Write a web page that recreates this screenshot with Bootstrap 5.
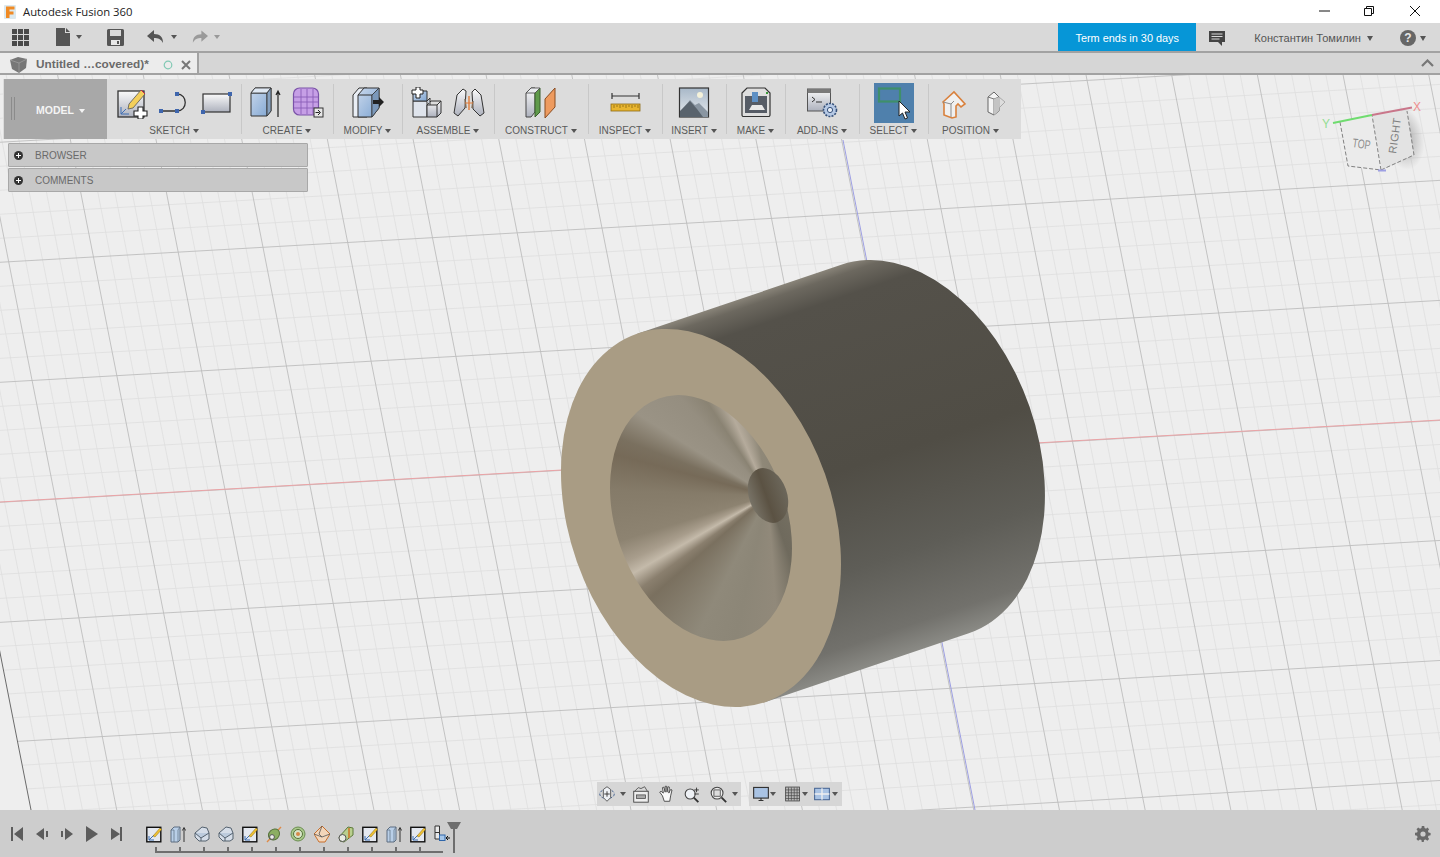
<!DOCTYPE html>
<html lang="en">
<head>
<meta charset="utf-8">
<title>Autodesk Fusion 360</title>
<link href="https://cdn.jsdelivr.net/npm/bootstrap@5.3.0/dist/css/bootstrap.min.css" rel="stylesheet">
<style>
html,body{height:857px;overflow:hidden;background:#eee;font-family:"Liberation Sans",Arial,sans-serif}
.app{height:857px}
.titlebar{height:23px;background:#fff;font:11.3px "Open Sans","Noto Sans",sans-serif;color:#222;flex:none}
.win-ctl{margin-left:auto;padding-right:15px;margin-top:-2px}
.quick{height:30px;background:#d9d9d9;border-bottom:2px solid #a2a2a2;flex:none}
.quick svg{display:block}
.q-right{margin-top:2px}
.term{width:138px;height:28px;background:#0696d7;color:#fff;font-size:10.9px;padding-top:2px;align-self:flex-start}
.user{font-size:11.1px;color:#555;white-space:nowrap}
.caret{display:inline-block;width:0;height:0;border-left:3px solid transparent;border-right:3px solid transparent;border-top:4px solid #555;flex:none}
.caret-lg{border-left-width:3.5px;border-right-width:3.5px;border-top-width:5px}
.tabrow{height:22px;background:#d6d6d6;border-bottom:2px solid #a2a2a2;flex:none}
.doc-tab{width:199px;height:20px;background:#ececec;border-right:2px solid #a2a2a2;color:#6a6a6a;font-weight:700;font-size:11.8px;padding-top:4px}
.viewport{flex:1 1 auto;overflow:hidden;background:#eee}
.scene{position:absolute;inset:0;width:1440px;height:735px}
.cone{width:100%;height:100%;background:conic-gradient(from 0deg at 158px 120.5px,#8d8676 0deg,#6f6a5d 161deg,#91897a 176deg,#8c8677 193deg,#8f897a 207deg,#7a705f 229deg,#8a7f6e 234deg,#c4baaa 240deg,#a89d8c 245deg,#8d8371 253deg,#857b69 272deg,#766a58 285deg,#7a705f 291deg,#9a9385 302deg,#958e80 318deg,#8a8373 327deg,#b5ab9c 336deg,#8f8878 350deg,#8d8676 360deg)}
.toolbar{left:3px;top:4px;width:1018px;height:60px;background:#dcdcdc}
.model{width:103px;height:60px;background:#a8a8a8;color:#f4f4f4;font-weight:700;font-size:10.5px;flex:none;padding-left:32px;padding-top:3px;gap:5px;margin-left:1px}
.model .caret{border-top-color:#f4f4f4}
.grip{left:7px;top:18px;width:4px;height:23px;border-left:1px solid #8b8b8b;border-right:1px solid #8b8b8b}
.tb-group{height:60px;position:relative;flex:none;padding-top:8px}
.tb-group+.tb-group::before{content:"";position:absolute;left:0;top:5px;bottom:5px;width:1px;background:#c8c8c8}
.tb-icons{gap:10px;height:32px}
.tb-icons svg{width:32px;height:32px;display:block}
.tb-label{font-size:10px;line-height:12px;color:#5a5a5a;margin-top:6px;gap:3px;white-space:nowrap}
.tb-label-l{margin-left:-8px}
.w134{width:134px}.w92{width:92px}.w69{width:69px}.w94{width:94px}.w74{width:74px}.w64{width:64px}.w59{width:59px}.w93{width:93px}
.tb-icons .sel{width:40px;height:40px;background:#4f80ac;margin-top:-4px;margin-bottom:-4px}
.panels{left:8px;top:68px;width:300px;gap:1px}
.panel-row{height:24px;background:#c8c8c8;border:1px solid #a8a8a8;color:#6a6a6a;font-size:10px;border-radius:1px;padding-left:5px;padding-top:1px;gap:12px}
.dot{width:9px;height:9px;flex:none}
.navbar-3d{left:597px;top:707px;gap:8px}
.nav-seg{height:24px;background:#d6d6d6}
.nav-seg svg{width:20px;height:20px;display:block}
.nav-a{padding-right:3px}
.nav-b{padding:0 4px 0 3px}
.nav-b svg{width:18px;height:18px}
.gl1{margin-left:1px}.gl3{margin-left:3px}.gl4{margin-left:4px}.gl5{margin-left:5px}.gl6{margin-left:6px}.gl8{margin-left:8px}
.timeline{height:47px;background:#cdcdcd;flex:none}
.tl-play{gap:11px;padding-left:10px}
.tl-play svg{width:14px;height:16px;display:block}
.tl-items{left:146px;top:15px;gap:8px}
.tl-items svg{width:16px;height:18px;display:block}
.tl-rail{left:155px;top:37px;width:288px;height:6px;border-bottom:2px solid #6e6e6e;background:repeating-linear-gradient(90deg,#6e6e6e 0 2px,transparent 2px 24px)}
.tl-marker{left:447px;top:11px}
.tl-gear{right:9px;top:16px}
</style>
</head>
<body>
<svg width="0" height="0" class="position-absolute">
<defs>
<linearGradient id="gBlue" x1="0" y1="0" x2="1" y2="1"><stop offset="0" stop-color="#c9d8ec"/><stop offset="1" stop-color="#7fa5d2"/></linearGradient>
<linearGradient id="gGray" x1="0" y1="0" x2="0" y2="1"><stop offset="0" stop-color="#fafafa"/><stop offset="1" stop-color="#adb1bd"/></linearGradient>
<linearGradient id="gSky" x1="0" y1="0" x2="0" y2="1"><stop offset="0" stop-color="#a8b8c8"/><stop offset="1" stop-color="#e6eaee"/></linearGradient>
<linearGradient id="gBody" gradientUnits="userSpaceOnUse" x1="842" y1="264" x2="968" y2="634"><stop offset="0" stop-color="#8a857a"/><stop offset=".025" stop-color="#6c685f"/><stop offset=".08" stop-color="#54514a"/><stop offset=".5" stop-color="#504d45"/><stop offset=".75" stop-color="#5e5d57"/><stop offset=".93" stop-color="#72716c"/><stop offset="1" stop-color="#8b8b86"/></linearGradient>
<linearGradient id="gSmall" x1="0" y1="0" x2="0" y2="1"><stop offset="0" stop-color="#6c675b"/><stop offset=".55" stop-color="#5b5243"/><stop offset="1" stop-color="#787367"/></linearGradient>
<radialGradient id="gShade"><stop offset="0" stop-color="#777" stop-opacity=".6"/><stop offset="1" stop-color="#777" stop-opacity="0"/></radialGradient>
<symbol id="tlSketch" viewBox="0 0 16 18"><rect x=".8" y="2.3" width="14" height="14.5" fill="#e4e8ef" stroke="#111" stroke-width="1.4"/><path d="M3 15V11M3 15H8M3 15L8 10" stroke="#3a6cb0" stroke-width="1" fill="none"/><path d="M7 11L14 3l1.6 1.6L9 12z" fill="#f1c232" stroke="#8a6d10" stroke-width=".5"/></symbol>
<symbol id="tlExtrude" viewBox="0 0 16 18"><path d="M1 5l3-3h6v13l-2 2H1z" fill="#b9cfe8" stroke="#5d6d80"/><path d="M4 5h-3M8 5l2-3M8 5v12M4 5v12" stroke="#5d6d80" fill="none" stroke-width=".7"/><path d="M14 17V3M12.4 5.5L14 2.500l1.600 3" stroke="#333" fill="none"/></symbol>
<symbol id="tlChamfer" viewBox="0 0 16 18"><path d="M1 8l7-6 5 1 2 5v6l-3 2H5l-4-4z" fill="#d5dde8" stroke="#55626f"/><path d="M1 8l6 5 8-5M7 13v3" stroke="#55626f" fill="#bccbdd"/></symbol>
<symbol id="gearI" viewBox="0 0 16 16"><path d="M6.800 0h2.400l.4 2.100 1.500.6L12.400 1.500l1.700 1.700-1.200 1.800.6 1.500 2.100.4v2.400l-2.100.4-.6 1.500 1.200 1.800-1.700 1.700-1.800-1.200-1.500.6-.4 2.100H6.800l-.4-2.100-1.500-.6-1.800 1.200-1.700-1.700 1.200-1.800-.6-1.500L0 9.200V6.800l2.100-.4.6-1.500L1.500 3.200l1.700-1.700 1.800 1.200 1.500-.6z" fill="#6a6a6a"/><circle cx="8" cy="8" r="2.600" fill="#cdcdcd"/></symbol>
</defs>
</svg>

<div class="app d-flex flex-column">
  <!-- title bar -->
  <div class="titlebar d-flex align-items-center">
    <svg class="ms-1 me-2" width="12" height="14" viewBox="0 0 12 14"><rect width="12" height="14" rx="1" fill="#dce9ee"/><path d="M2 1.500h8.500v3H5.500v2h4v3h-4v3.500H2z" fill="#f08a24"/></svg>
    <span style="margin-left:-1px">Autodesk Fusion 360</span>
    <div class="win-ctl d-flex align-items-center">
      <svg width="16" height="12" viewBox="0 0 16 12"><path d="M1 6h11" stroke="#111"/></svg>
      <svg style="margin-left:26.500px" width="16" height="12" viewBox="0 0 16 12"><path d="M3.500 3.500h7v7h-7zM5.500 3.500v-2h7v7h-2" fill="none" stroke="#111"/></svg>
      <svg style="margin-left:32.500px" width="16" height="12" viewBox="0 0 16 12"><path d="M1 1l10 10M11 1L1 11" stroke="#111"/></svg>
    </div>
  </div>

  <!-- quick access -->
  <div class="quick d-flex align-items-center position-relative">
    <svg class="flex-none" style="margin-left:12px" width="18" height="17" viewBox="0 0 18 17"><path d="M0 0h5v5H0zM6 0h5v5H6zM12 0h5v5h-5zM0 6h5v5H0zM6 6h5v5H6zM12 6h5v5h-5zM0 12h5v5H0zM6 12h5v5H6zM12 12h5v5h-5z" fill="#4a4a4a"/></svg>
    <svg style="margin-left:26px" width="15" height="18" viewBox="0 0 15 18"><path d="M0 0h9v5h5v13H0zM10 0l4 4h-4z" fill="#555"/></svg>
    <span class="caret" style="margin-left:5px"></span>
    <svg style="margin-left:25px" width="17" height="17" viewBox="0 0 17 17"><path d="M0 1.500A1.500 1.500 0 011.500 0h14A1.500 1.500 0 0117 1.500v14a1.500 1.500 0 01-1.500 1.500h-14A1.500 1.500 0 010 15.500z" fill="#555"/><rect x="3" y="1" width="11" height="6" fill="#d9d9d9"/><rect x="4" y="11" width="9" height="5" fill="#e8e8e8"/><rect x="10" y="12" width="2" height="3" fill="#555"/></svg>
    <svg style="margin-left:23px" width="18" height="14" viewBox="0 0 18 14"><path d="M7 0L0 6l7 6V8c4 0 7 1 9 5 0-6-3-9-9-9z" fill="#555"/></svg>
    <span class="caret" style="margin-left:6px"></span>
    <svg style="margin-left:14px" width="17" height="14" viewBox="0 0 18 14"><path d="M11 0l7 6-7 6V8c-4 0-7 1-9 5 0-6 3-9 9-9z" fill="#9a9a9a"/></svg>
    <span class="caret" style="margin-left:6px;border-top-color:#999"></span>
    <div class="term d-flex align-items-center justify-content-center ms-auto">Term ends in 30 days</div>
    <svg class="q-right" style="margin-left:13px" width="16" height="15" viewBox="0 0 16 15"><path d="M0 0h16v11h-3v4l-4-4H0z" fill="#444"/><path d="M2.500 3h11M2.500 5.500h11M2.500 8h8" stroke="#d9d9d9"/></svg>
    <span class="user q-right" style="margin-left:29px">Константин Томилин</span>
    <span class="caret caret-lg q-right" style="margin-left:6px"></span>
    <svg class="q-right" style="margin-left:27px" width="16" height="16" viewBox="0 0 16 16"><circle cx="8" cy="8" r="8" fill="#666"/><text x="8" y="12.300" font-size="12" font-weight="700" text-anchor="middle" fill="#e6e6e6" font-family="Liberation Sans">?</text></svg>
    <span class="caret caret-lg q-right" style="margin-left:4px;margin-right:14px"></span>
  </div>

  <!-- document tab -->
  <div class="tabrow d-flex align-items-center">
    <div class="doc-tab d-flex align-items-center">
      <svg style="margin-left:10px" width="17" height="16" viewBox="0 0 17 16"><path d="M0 3l8-3 9 2-1 9-7 5-7-4z" fill="#777"/><path d="M0 3l9 3 8-4M9 6l0 10" stroke="#aaa" stroke-width=".6" fill="none"/></svg>
      <span style="margin-left:9px">Untitled …covered)*</span>
      <svg style="margin-left:14px" width="10" height="10" viewBox="0 0 10 10"><circle cx="5" cy="5" r="3.800" fill="none" stroke="#82c9b4" stroke-width="1.200"/></svg>
      <svg style="margin-left:8px" width="10" height="10" viewBox="0 0 10 10"><path d="M1 1l8 8M9 1L1 9" stroke="#777" stroke-width="2"/></svg>
    </div>
    <svg class="ms-auto" style="margin-right:6px" width="13" height="8" viewBox="0 0 13 8"><path d="M1 7l5.500-5.500L12 7" stroke="#777" stroke-width="2.200" fill="none"/></svg>
  </div>

  <!-- viewport -->
  <div class="viewport position-relative">
    <svg class="scene" viewBox="0 75 1440 735">
      <g id="grid"></g>
      <path d="M0 502L1440 420" stroke="#eba3a6" stroke-width="1"/>
      <path d="M843 140L975 810" stroke="#9d9fe3" stroke-width="1"/>
      <!-- body -->
      <path d="M637.200 333.800L841.200 264.800A195 131.600 70.600 0 1 1029.600 406.800A195 131.600 70.600 0 1 968.800 633.200L764.800 702.200z" fill="url(#gBody)"/>
      <!-- front face -->
      <ellipse cx="701" cy="518" rx="195" ry="131.600" transform="rotate(70.600 701 518)" fill="#a99c84"/>
      <clipPath id="hole"><ellipse cx="701" cy="518" rx="126.800" ry="85.500" transform="rotate(70.600 701 518)"/></clipPath>
      <g clip-path="url(#hole)">
        <foreignObject x="610" y="375" width="200" height="280"><div xmlns="http://www.w3.org/1999/xhtml" class="cone"></div></foreignObject>
      </g>
      <ellipse cx="768" cy="495.500" rx="28.300" ry="19" transform="rotate(70.600 768 495.500)" fill="url(#gSmall)"/>
      <!-- view cube -->
      <g>
        <ellipse cx="1404" cy="138" rx="20" ry="32" transform="rotate(-10 1404 138)" fill="url(#gShade)"/>
        <path d="M1340 122L1372 115L1407 111L1413 155L1382 170L1348 167z" fill="#ebebeb"/>
        <path d="M1372 115L1407 111L1414 155L1382 170z" fill="#e3e3e3"/>
        <path d="M1340 122L1348 166L1381 170L1372 115M1381 170L1414 155L1407 111" fill="none" stroke="#666" stroke-width=".8" stroke-dasharray="4 2"/>
        <text x="0" y="0" transform="translate(1352 147) rotate(8) scale(.8 1.150)" font-size="11" fill="#8c8c8c" font-family="Liberation Sans">TOP</text>
        <text x="0" y="0" transform="translate(1396 154) rotate(-82)" font-size="11" letter-spacing=".4" fill="#808080" font-family="Liberation Sans">RIGHT</text>
        <path d="M1333 123L1372 115" stroke="#6fdc6f" stroke-width="2"/>
        <path d="M1372 115L1412 107.500" stroke="#c9768a" stroke-width="2"/>
        <text x="1413" y="111" font-size="12" fill="#ef8f8f" font-family="Liberation Sans">X</text>
        <text x="1322" y="128" font-size="12" fill="#93dd93" font-family="Liberation Sans">Y</text>
        <path d="M1378 170.500h8" stroke="#9d9fe3" stroke-width="2"/>
      </g>
    </svg>

    <!-- toolbar -->
    <div class="toolbar position-absolute d-flex">
      <div class="model d-flex align-items-center position-relative">MODEL<span class="caret"></span><span class="grip position-absolute"></span></div>

      <div class="tb-group w134">
        <div class="tb-icons d-flex justify-content-center">
          <svg viewBox="0 0 32 32"><rect x="2" y="4" width="26" height="26" fill="url(#gGray)" stroke="#333" stroke-width="1.300"/><path d="M5 20v7h8M5 27l5-5" stroke="#3f6fb5" fill="none"/><path d="M13 17L25 3l4 4L17 21l-5 1z" fill="#f3cf5b" stroke="#555" stroke-width=".8"/><path d="M25 3l4 4" stroke="#c24" /><path d="M22 20h5v4h4v5h-4v3h-5v-3h-4v-5h4z" fill="#fff" stroke="#222" stroke-width="1.100"/></svg>
          <svg viewBox="0 0 32 32"><path d="M4 24H19C30 24 30 7 19 7" fill="none" stroke="#333" stroke-width="1.300"/><path d="M1 22h4v4H1zM17 22h4v4h-4zM17 5h4v4h-4z" fill="#3f66ad"/></svg>
          <svg viewBox="0 0 32 32"><rect x="3" y="7" width="27" height="18" fill="url(#gGray)" stroke="#333" stroke-width="1.200"/><path d="M28 5h4v4h-4zM1 23h4v4H1z" fill="#3f66ad"/></svg>
        </div>
        <div class="tb-label d-flex align-items-center justify-content-center">SKETCH<span class="caret"></span></div>
      </div>

      <div class="tb-group w92">
        <div class="tb-icons d-flex justify-content-center">
          <svg viewBox="0 0 32 32"><path d="M1 6l4-5h16v23l-4 5H1z" fill="url(#gBlue)" stroke="#333"/><path d="M1 6h16l4-5M17 6v23" fill="none" stroke="#333"/><path d="M1 6l4-5h16l-4 5z" fill="#dfe8f3" stroke="#333" stroke-width=".8"/><path d="M17 6l4-5v23l-4 5z" fill="#87a1bf" stroke="#333" stroke-width=".8"/><path d="M28 30V4M26 8l2-4 2 4" stroke="#222" fill="none" stroke-width="1.200"/></svg>
          <svg viewBox="0 0 32 32"><rect x="1.500" y="1" width="25" height="27" rx="6" fill="#c69fe6" stroke="#7a52a8" stroke-width="1.200"/><path d="M2 10h24M2 15h24M2 21h24M9 2v25M15 2v25M21 2v25" stroke="#8b5fb8" stroke-width=".9"/><rect x="22" y="21" width="9" height="9" fill="#e7e7e7" stroke="#333"/><path d="M23.500 25.500h4M26 23l2.500 2.500-2.500 2.500" stroke="#222" fill="none"/></svg>
        </div>
        <div class="tb-label d-flex align-items-center justify-content-center">CREATE<span class="caret"></span></div>
      </div>

      <div class="tb-group w69">
        <div class="tb-icons d-flex justify-content-center">
          <svg viewBox="0 0 32 32"><path d="M1 30V8l6-7h8v29z" fill="#e9eef5" stroke="#333"/><path d="M6 30V8l6-7h15v20l-7 9z" fill="url(#gBlue)" stroke="#333"/><path d="M6 8h14l7-7M20 8v22" stroke="#333" fill="none"/><path d="M20 8l7-7v20l-7 9z" fill="#7b98ba" stroke="#333" stroke-width=".7"/><path d="M21 13h6v-3l5 5-5 5v-3h-6z" fill="#222"/></svg>
        </div>
        <div class="tb-label d-flex align-items-center justify-content-center">MODIFY<span class="caret"></span></div>
      </div>

      <div class="tb-group w92">
        <div class="tb-icons d-flex justify-content-center">
          <svg viewBox="0 0 32 32"><path d="M2 14h14v16H2z" fill="#dfe4ec" stroke="#333"/><path d="M2 4h14v10H2z" fill="url(#gBlue)" stroke="#333"/><path d="M16 18h10l4-4v12l-4 4H16z" fill="url(#gGray)" stroke="#333"/><path d="M16 18l4-4h10M26 18v12" stroke="#333" fill="none"/><path d="M16 14l3-3v7" stroke="#333" fill="#c7ced8"/><path d="M5 0h4v3h3v4H9v4H5V7H1V3h4z" fill="#fff" stroke="#222"/></svg>
          <svg viewBox="0 0 32 32"><path d="M1 26L4 8l6-6 3 2-1 17-7 8z" fill="url(#gGray)" stroke="#333"/><path d="M31 26L28 8l-6-6-3 3 1 17 7 7z" fill="url(#gGray)" stroke="#333"/><path d="M12 12l1 9M20 14l-1 7" stroke="#7f6b58" stroke-width="1.500"/><path d="M16 9v14" stroke="#e07b39" stroke-width="1.400"/><path d="M12 16h8" stroke="#e07b39"/></svg>
        </div>
        <div class="tb-label d-flex align-items-center justify-content-center">ASSEMBLE<span class="caret"></span></div>
      </div>

      <div class="tb-group w94">
        <div class="tb-icons d-flex justify-content-center">
          <svg viewBox="0 0 32 32"><path d="M1 6l5-5h4v24l-4 5H1z" fill="url(#gGray)" stroke="#444"/><path d="M10 6L15 1v24l-5 5V6z" fill="#5f9a4b" stroke="#3b5f2e"/><path d="M1 6h9l5-5H6z" fill="#e9ecef" stroke="#444" stroke-width=".8"/><path d="M20 12l10-11v19L20 31z" fill="#ee9b5f" stroke="#8a4c20"/></svg>
        </div>
        <div class="tb-label d-flex align-items-center justify-content-center">CONSTRUCT<span class="caret"></span></div>
      </div>

      <div class="tb-group w74">
        <div class="tb-icons d-flex justify-content-center">
          <svg viewBox="0 0 32 32"><path d="M3 9h27M3 6v6M30 6v6" stroke="#333" stroke-width="1.200" fill="none"/><rect x="2" y="17" width="29" height="7" fill="#e8b52f" stroke="#8d6a12" stroke-width=".8"/><path d="M5 18v3M8 18v2M11 18v3M14 18v2M17 18v3M20 18v2M23 18v3M26 18v2M29 18v3" stroke="#7c5c10" stroke-width=".7"/></svg>
        </div>
        <div class="tb-label d-flex align-items-center justify-content-center">INSPECT<span class="caret"></span></div>
      </div>

      <div class="tb-group w64">
        <div class="tb-icons d-flex justify-content-center">
          <svg viewBox="0 0 32 32"><rect x="1.500" y="1" width="29" height="29" fill="url(#gSky)" stroke="#333" stroke-width="1.200"/><circle cx="22" cy="8" r="3" fill="#f5f2da"/><path d="M2 30V25L12 13l5 5 4-2 9 9v5z" fill="#8a96a2"/><path d="M2 30V24L12 14l7 8 6 8z" fill="#59636d"/></svg>
        </div>
        <div class="tb-label d-flex align-items-center justify-content-center">INSERT<span class="caret"></span></div>
      </div>

      <div class="tb-group w59">
        <div class="tb-icons d-flex justify-content-center">
          <svg viewBox="0 0 32 32"><path d="M2 6l5-5h18l5 5v22a1.500 1.500 0 01-1.500 1.500h-25A1.500 1.500 0 012 28z" fill="#dedede" stroke="#333" stroke-width="1.200"/><rect x="5" y="9" width="22" height="17" fill="#565c66"/><rect x="12" y="5" width="6" height="10" fill="#5d8fc4"/><path d="M9 23l3-5h10l3 5z" fill="#e8e8e8"/><rect x="26" y="5" width="2" height="2" fill="#3a9a3a"/></svg>
        </div>
        <div class="tb-label d-flex align-items-center justify-content-center">MAKE<span class="caret"></span></div>
      </div>

      <div class="tb-group w74">
        <div class="tb-icons d-flex justify-content-center">
          <svg viewBox="0 0 32 32"><rect x="1.500" y="2" width="23" height="22" fill="url(#gGray)" stroke="#555"/><rect x="1.500" y="2" width="23" height="4" fill="#7a7a7a"/><path d="M6 10l3 2.500L6 15M10 15h6" stroke="#333" fill="none"/><circle cx="24" cy="23" r="6.500" fill="#b5c8e4" stroke="#35507a" stroke-dasharray="2 1.200" stroke-width="1.600"/><circle cx="24" cy="23" r="2.600" fill="#e9eef6" stroke="#35507a"/></svg>
        </div>
        <div class="tb-label d-flex align-items-center justify-content-center">ADD-INS<span class="caret"></span></div>
      </div>

      <div class="tb-group w69">
        <div class="tb-icons d-flex justify-content-center">
          <svg class="sel" viewBox="0 0 40 40"><rect x="5" y="5.500" width="21" height="13" fill="none" stroke="#3f8f6a" stroke-width="2.200"/><path d="M25 18v15l3.500-3 2.500 6 2.500-1-2.500-6h5z" fill="#fff" stroke="#222"/></svg>
        </div>
        <div class="tb-label d-flex align-items-center justify-content-center">SELECT<span class="caret"></span></div>
      </div>

      <div class="tb-group w93">
        <div class="tb-icons d-flex justify-content-center">
          <svg viewBox="0 0 32 32"><path d="M5 15L16 5l11 12-4 3-3-3-2 2v11l-4 1-8-3V17z" fill="#f0f0f0" stroke="#d9813d" stroke-width="1.600"/><path d="M13 17v13M5 15l8 2 3-3" stroke="#8b8b8b" fill="none"/></svg>
          <svg viewBox="0 0 32 32"><path d="M8 10l6-5 5 5v14l-5 4-6-3z" fill="#f4f4f4" stroke="#666"/><path d="M19 10l6 5-6 6z" fill="#ddd" stroke="#aaa"/><path d="M14 12v16M8 10l6 2 5-2" stroke="#777" fill="none"/><path d="M14 12v16l5-4V10z" fill="#c4c4c4"/></svg>
        </div>
        <div class="tb-label tb-label-l d-flex align-items-center justify-content-center">POSITION<span class="caret"></span></div>
      </div>
    </div>

    <!-- browser panels -->
    <div class="panels position-absolute d-flex flex-column">
      <div class="panel-row d-flex align-items-center"><svg class="dot" viewBox="0 0 9 9"><circle cx="4.500" cy="4.500" r="4.500" fill="#333"/><path d="M2 4.500h5M4.500 2v5" stroke="#fff"/></svg>BROWSER</div>
      <div class="panel-row d-flex align-items-center"><svg class="dot" viewBox="0 0 9 9"><circle cx="4.500" cy="4.500" r="4.500" fill="#333"/><path d="M2 4.500h5M4.500 2v5" stroke="#fff"/></svg>COMMENTS</div>
    </div>

    <!-- navigation bar -->
    <div class="navbar-3d position-absolute d-flex">
      <div class="nav-seg nav-a d-flex align-items-center">
        <svg viewBox="0 0 22 22"><ellipse cx="11" cy="11" rx="8" ry="5" fill="none" stroke="#3f5f8f" stroke-dasharray="3 1.500"/><path d="M11 3l4 3v9l-4 4-4-4V6z" fill="#eef1f5" stroke="#444" stroke-width=".9"/><path d="M8 11h6M11 8v6" stroke="#333"/></svg>
        <span class="caret gl3"></span>
        <svg class="gl5" viewBox="0 0 22 22"><rect x="3" y="8" width="16" height="12" fill="#eee" stroke="#444"/><rect x="6" y="12" width="10" height="4" fill="#aaa" stroke="#444" stroke-width=".8"/><path d="M4 8l4-4 3 1 4-2 3 5" fill="none" stroke="#555"/></svg>
        <svg class="gl6" viewBox="0 0 22 22"><path d="M6 13L3 9l1.500-1L7 10 6 4l1.500-.5L9 9V2.500h1.600L11 9l1-6 1.600.4L13 10l2-4 1.500.6L15 13l-1 6H8z" fill="#fafafa" stroke="#333" stroke-width=".9"/></svg>
        <svg class="gl5" viewBox="0 0 22 22"><circle cx="9" cy="11" r="5.500" fill="#eef1f5" stroke="#444" stroke-width="1.200"/><path d="M13 15l5 5" stroke="#333" stroke-width="2"/><path d="M16 4v5M13.500 6.500h5M13.500 11h5" stroke="#333"/></svg>
        <svg class="gl6" viewBox="0 0 22 22"><circle cx="10" cy="10" r="6.500" fill="#eee" stroke="#444" stroke-width="1.200"/><rect x="6.500" y="6.500" width="7" height="7" fill="#ddd" stroke="#555"/><path d="M15 15l5 5" stroke="#333" stroke-width="2"/></svg>
        <span class="caret gl4"></span>
      </div>
      <div class="nav-seg nav-b d-flex align-items-center">
        <svg viewBox="0 0 22 22"><rect x="2" y="3" width="18" height="13" fill="#a9c3e4" stroke="#333" stroke-width="1.400"/><path d="M8 19h6M11 16v3" stroke="#333" stroke-width="1.400"/></svg>
        <span class="caret"></span>
        <svg class="gl8" viewBox="0 0 22 22"><rect x="2" y="2.500" width="17" height="17" fill="#b7b7b7" stroke="#444"/><path d="M5.500 3v16M9 3v16M12.500 3v16M16 3v16M2 6h17M2 9.500h17M2 13h17M2 16.500h17" stroke="#444" stroke-width=".8"/></svg>
        <span class="caret"></span>
        <svg class="gl5" viewBox="0 0 22 22"><rect x="2" y="4" width="18" height="14" fill="#a9c3e4" stroke="#3f5f8f" stroke-width="1.200"/><path d="M11 4v14M2 11h18" stroke="#f0f0f0" stroke-width="1.600"/></svg>
        <span class="caret gl1"></span>
      </div>
    </div>
  </div>

  <!-- timeline -->
  <div class="timeline position-relative d-flex align-items-center">
    <div class="tl-play d-flex align-items-center" style="margin-top:1px">
      <svg viewBox="0 0 14 16"><path d="M1 1h2v14H1zM13 1v14L4 8z" fill="#5c5c5c"/></svg>
      <svg viewBox="0 0 14 16"><path d="M9 2v12L1 8zM11 5h2v6h-2z" fill="#5c5c5c"/></svg>
      <svg viewBox="0 0 14 16"><path d="M5 2v12l8-6zM1 5h2v6H1z" fill="#5c5c5c"/></svg>
      <svg viewBox="0 0 14 16"><path d="M1 0v16L13 8z" fill="#5c5c5c"/></svg>
      <svg viewBox="0 0 14 16"><path d="M1 2v12L10 8zM10 1h2v14h-2z" fill="#5c5c5c"/></svg>
    </div>
    <div class="tl-items position-absolute d-flex">
      <svg><use href="#tlSketch"/></svg>
      <svg><use href="#tlExtrude"/></svg>
      <svg><use href="#tlChamfer"/></svg>
      <svg><use href="#tlChamfer"/></svg>
      <svg><use href="#tlSketch"/></svg>
      <svg viewBox="0 0 16 18"><path d="M1 17L15 2" stroke="#e08a45" stroke-width="1.300"/><ellipse cx="8" cy="9.500" rx="5" ry="6" transform="rotate(45 8 9.500)" fill="#8cae63" stroke="#55713a"/><circle cx="6" cy="12" r="2.400" fill="#eee" stroke="#555"/></svg>
      <svg viewBox="0 0 16 18"><circle cx="8" cy="9" r="7" fill="#a9c98b" stroke="#6c8d52"/><circle cx="8" cy="9" r="4.500" fill="#d8e4c8" stroke="#55713a"/><circle cx="8" cy="9" r="2" fill="#d68a4a"/></svg>
      <svg viewBox="0 0 16 18"><path d="M8 1l8 8-5 8H5L0 9z" fill="#f3d6ba" stroke="#c76f2c"/><path d="M0 9l8 3 8-3M8 1L5 9l3 3" stroke="#555" fill="none" stroke-width=".8"/></svg>
      <svg viewBox="0 0 16 18"><path d="M1 12l9-10 5 1v7l-9 7-4-1z" fill="#b9cf8e" stroke="#5d7a3a"/><circle cx="4.500" cy="13" r="3.500" fill="#e9ece2" stroke="#555"/><path d="M11 3v10" stroke="#c78a3c" stroke-width="2"/></svg>
      <svg><use href="#tlSketch"/></svg>
      <svg><use href="#tlExtrude"/></svg>
      <svg><use href="#tlSketch"/></svg>
      <svg viewBox="0 0 16 18"><path d="M1 1h4.500v6.500H1zM1 7.500h4.500V14H1z" fill="#e9e9e9" stroke="#333"/><rect x="5.500" y="10" width="5.500" height="5.500" fill="#a6c7ea" stroke="#2f66aa"/><path d="M16 13h-4M14 11l-2 2 2 2" stroke="#111" fill="none"/></svg>
    </div>
    <div class="tl-rail position-absolute"></div>
    <svg class="tl-marker position-absolute" width="14" height="32" viewBox="0 0 14 32"><path d="M0 1h14l-4 7H8v24H6V8H4z" fill="#6e6e6e"/></svg>
    <svg class="tl-gear position-absolute" width="16" height="16"><use href="#gearI"/></svg>
  </div>
</div>

<script src="https://cdn.jsdelivr.net/npm/bootstrap@5.3.0/dist/js/bootstrap.bundle.min.js"></script>
<script>
// Construction-plane grid: a flat plane seen from above, computed from its origin and axis vectors.
(function(){
  var O=[903,451],u=[84.75,-4.82],v=[23.4,118.7],out='';
  var P=function(a,b){return (O[0]+a*u[0]+b*v[0]).toFixed(1)+' '+(O[1]+a*u[1]+b*v[1]).toFixed(1)};
  var amin=-11,amax=8,bmin=-5,bmax=4;
  function line(a0,b0,a1,b1,c,w){out+='<path d="M'+P(a0,b0)+'L'+P(a1,b1)+'" stroke="'+c+'" stroke-width="'+w+'"/>';}
  for(var i=amin*5;i<=amax*5;i++){ if(i%5) line(i/5,bmin,i/5,bmax,'#dedede',.8); }
  for(var j=bmin*5;j<=bmax*5;j++){ if(j%5) line(amin,j/5,amax,j/5,'#dedede',.8); }
  for(i=amin+1;i<=amax;i++) line(i,bmin,i,bmax,'#bdbdbd',.9);
  for(j=bmin;j<=bmax;j++) line(amin,j,amax,j,'#bdbdbd',.9);
  line(amin,bmin,amin,bmax,'#6b6b6b',1);
  document.getElementById('grid').innerHTML=out;
})();
</script>
</body>
</html>
